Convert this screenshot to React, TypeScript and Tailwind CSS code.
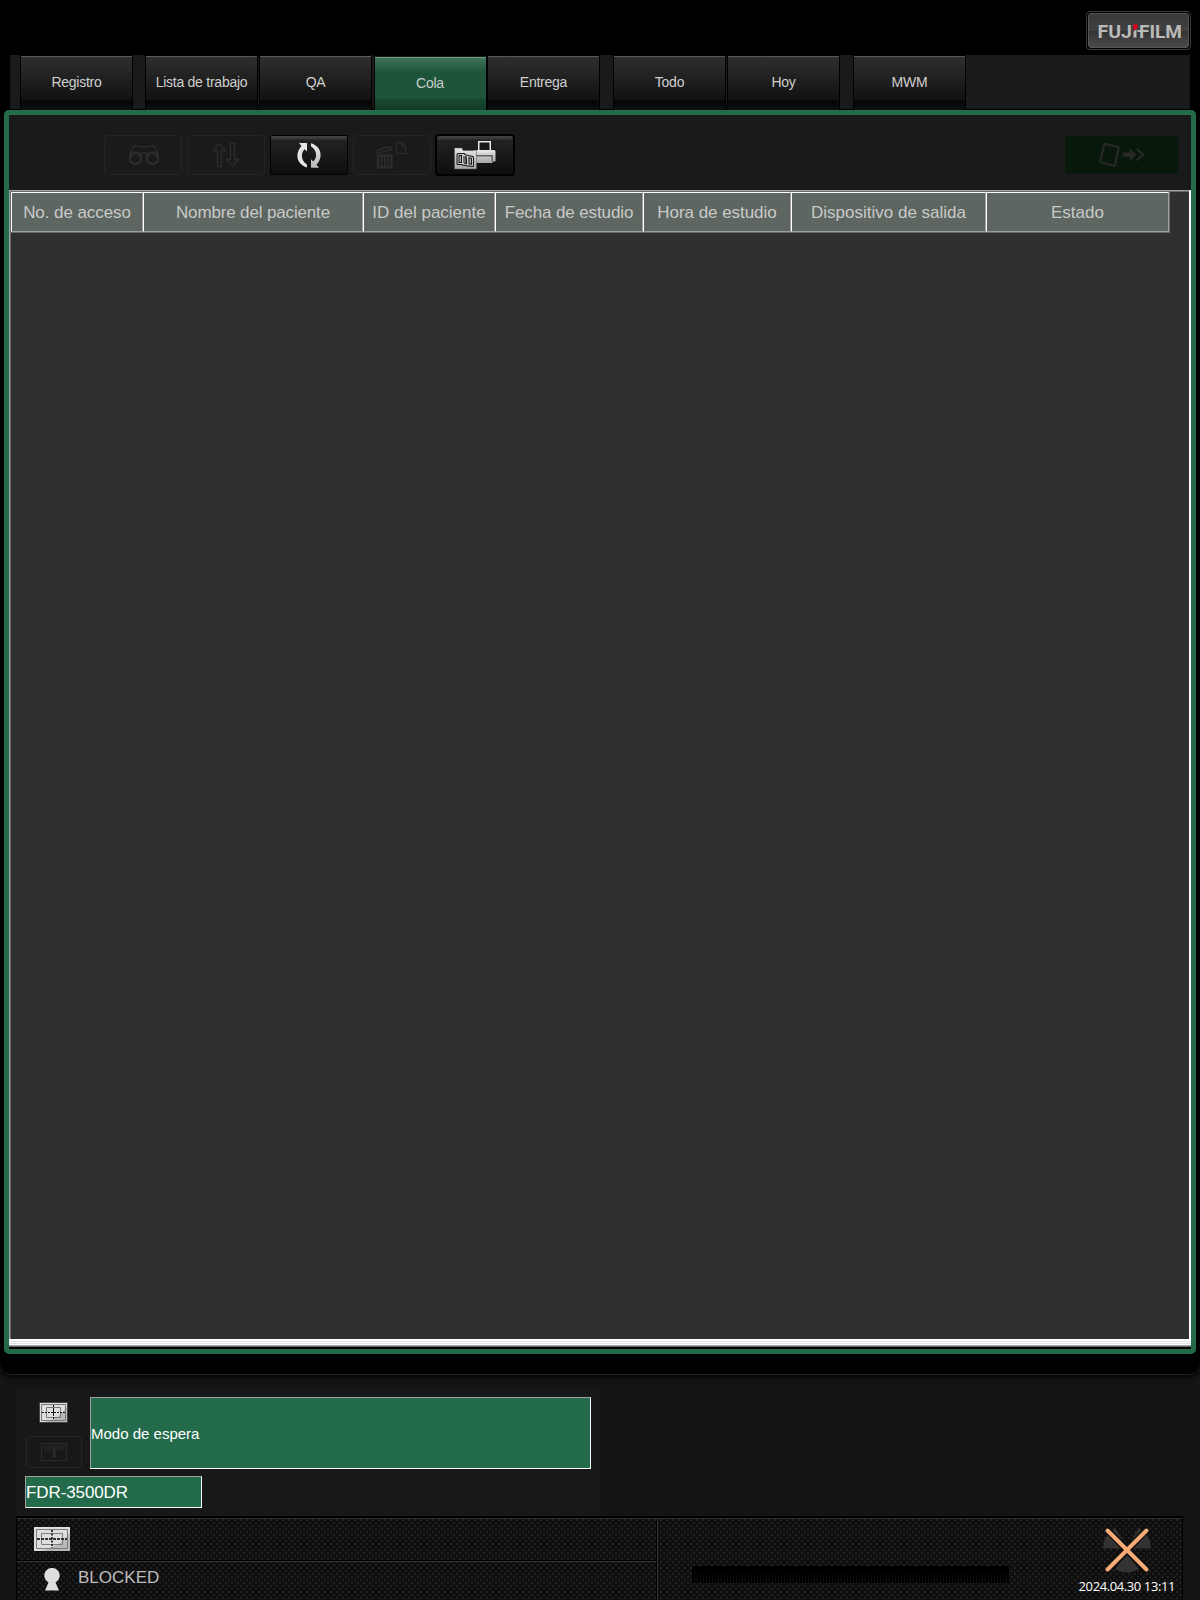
import React from "react";

type TabDef = { label: string; gap: string; active?: boolean };

const tabs: TabDef[] = [
  { label: "Registro", gap: "ml-[10px]" },
  { label: "Lista de trabajo", gap: "ml-[12px]" },
  { label: "QA", gap: "ml-[1px]" },
  { label: "Cola", gap: "ml-[2px]", active: true },
  { label: "Entrega", gap: "ml-0" },
  { label: "Todo", gap: "ml-[13px]" },
  { label: "Hoy", gap: "ml-[1px]" },
  { label: "MWM", gap: "ml-[13px]" },
];

const columns = [
  { label: "No. de acceso", w: "w-[132px]", t: "tracking-[-0.08px]" },
  { label: "Nombre del paciente", w: "w-[220px]", t: "tracking-[-0.15px]" },
  { label: "ID del paciente", w: "w-[132px]", t: "tracking-normal" },
  { label: "Fecha de estudio", w: "w-[148px]", t: "tracking-[-0.12px]" },
  { label: "Hora de estudio", w: "w-[148px]", t: "tracking-[-0.05px]" },
  { label: "Dispositivo de salida", w: "w-[195px]", t: "tracking-normal" },
  { label: "Estado", w: "w-[183px]", t: "tracking-normal" },
];

function Tab({ label, gap, active }: TabDef) {
  return (
    <div
      className={`${gap} w-[113px] h-[55px] shrink-0 border-x border-t border-black flex flex-col ${
        active ? "pt-px" : ""
      }`}
    >
      <div
        className={
          active
            ? "flex-1 border-t border-[#6d9a83] bg-[linear-gradient(#3f7459_0px,#1e5439_14px,#1e5439_40px,#184930_41px,#123a26_53px)] flex items-center justify-center text-[#c8d0cb] text-[14px] leading-none pb-[3px] pr-px"
            : "flex-1 border-t border-[#5a5a5a] bg-[linear-gradient(#2f2f2f_0px,#111_43px,#040404_44px,#111_53px)] flex items-center justify-center text-[#cfcfcf] text-[14px] leading-none pb-[4px]"
        }
      >
        <span className="whitespace-nowrap tracking-[-0.25px]">{label}</span>
      </div>
    </div>
  );
}

function ToolButton({ kind, children }: { kind: "off" | "on" | "focus"; children: React.ReactNode }) {
  const cls =
    kind === "off"
      ? "w-[78px] h-[40px] border border-[#242424] rounded-[4px]"
      : kind === "on"
      ? "w-[78px] h-[40px] border border-black rounded-[2px] bg-[linear-gradient(#424242_0px,#363636_3px,#222_4px,#0e0e0e_38px)]"
      : "w-[80px] h-[42px] -mx-px border-2 border-black rounded-[4px] bg-[linear-gradient(#424242_0px,#363636_3px,#222_4px,#0e0e0e_38px)]";
  return <div className={`${cls} shrink-0 flex items-center justify-center`}>{children}</div>;
}

function Binoculars() {
  return (
    <svg className="ml-px" width="32" height="22" viewBox="0 0 32 22" fill="none" stroke="#2c2c2c">
      <circle cx="7.5" cy="14.5" r="5.600" strokeWidth="2.400" />
      <circle cx="24.500" cy="14.500" r="5.600" strokeWidth="2.400" />
      <path d="M2 11 L4.500 4 Q5.500 1.500 9 1.500 Q11 3 16 3 Q21 3 23 1.500 Q26.500 1.500 27.500 4 L30 11" strokeWidth="1.400" />
      <path d="M12.500 12 L14 9 M19.500 12 L18 9 M12.500 9 H19.500" strokeWidth="1.600" />
    </svg>
  );
}

function SortArrows() {
  return (
    <svg width="28" height="26" viewBox="0 0 28 26" fill="none" stroke="#2c2c2c" strokeWidth="1.300">
      <path d="M5.500 24.500 V8.500 H1.500 L7.500 1.500 L13.500 8.500 H9.500 V24.500 Z" />
      <path d="M18.500 1.500 V17.500 H14.500 L20.500 24.500 L26.500 17.500 H22.500 V1.500 Z" />
    </svg>
  );
}

function Refresh() {
  return (
    <svg width="26" height="27" viewBox="0 0 26 27">
      <defs>
        <linearGradient id="ref" x1="0" y1="0" x2="0" y2="1">
          <stop offset="0" stopColor="#ececec" />
          <stop offset="1" stopColor="#b8b8b8" />
        </linearGradient>
      </defs>
      <path d="M3 1 H11 V9.500 L8.700 7.300 C4.500 11 4.800 18.500 11 22.600 V25.500 C0.500 22.500 -1.500 11.500 5.500 4 Z" fill="#e4e4e4" />
      <path d="M23 25.800 H15 V17.300 L17.300 19.500 C21.500 15.800 21.200 8.300 15 4.200 V1.300 C25.500 4.300 27.500 15.300 20.500 22.800 Z" fill="url(#ref)" />
    </svg>
  );
}

function TrashDoc() {
  return (
    <svg className="mr-[2px]" width="32" height="28" viewBox="0 0 32 28" fill="none" stroke="#2c2c2c">
      <path d="M21.500 1.500 H27 L30.500 5 V12.500 H21.500 Z M27 1.500 V5 H30.500" strokeWidth="1.200" />
      <path d="M1.500 12.500 L17 8.500 M2.500 10.500 Q3 8 6.500 9 Q9 5 11.500 7 Q15.500 5 16.500 8.500" strokeWidth="1.800" />
      <path d="M3 14.500 H16.500 V26.500 H3 Z" strokeWidth="2.400" />
      <path d="M6.700 14 V26 M9.700 14 V26 M12.700 14 V26" strokeWidth="1.600" />
    </svg>
  );
}

const SHEETS =
  "M13.500 16.500 L18.500 17.500 V25.500 L13.500 24.500 Z M8.500 15 L14 16.500 V25 L8.500 24 Z M4 14.500 H10 V23.500 H4 Z";

function FolderPrinter() {
  return (
    <svg width="42" height="30" viewBox="0 0 42 30">
      <defs>
        <linearGradient id="fp" x1="0" y1="0" x2="0" y2="1">
          <stop offset="0" stopColor="#e6e6e6" />
          <stop offset="1" stopColor="#a5a5a5" />
        </linearGradient>
      </defs>
      <path d="M20 10 H40 Q41.500 10 41.500 11.500 V21.500 H38.500 V23 H20 Z" fill="url(#fp)" />
      <rect x="24.750" y="1.750" width="11.500" height="9" fill="#161616" stroke="#e8e8e8" strokeWidth="1.500" />
      <path d="M22 15 H39 V21 H37.500 V16.500 H22 Z" fill="#606060" />
      <path d="M0.500 8 H8 L9 10.500 H22.500 V29 H0.500 Z" fill="url(#fp)" stroke="#555" strokeWidth="0.500" />
      <path d={SHEETS} fill="#aaa" stroke="#151515" strokeWidth="3" strokeLinejoin="round" />
      <path d={SHEETS} fill="none" stroke="#dcdcdc" strokeWidth="0.900" strokeLinejoin="round" />
    </svg>
  );
}

function SendArrow() {
  return (
    <svg className="ml-px" width="48" height="26" viewBox="0 0 48 26" fill="none" stroke="#272927">
      <path d="M6.500 1.500 L21 5.500 L16.500 24 L2 20 Z" strokeWidth="2.200" strokeLinejoin="round" />
      <path d="M25 10.500 H32 V6.500 L38.500 12.800 L32 19 V15 H25 Z" fill="#272927" stroke="none" />
      <path d="M38.500 7 L45.500 12.800 L38.500 18.500" strokeWidth="2.200" />
    </svg>
  );
}

function Detector() {
  return (
    <svg width="36" height="24" viewBox="0 0 36 24">
      <rect width="36" height="24" fill="#dedede" />
      <path d="M36 5 V24 H5 C18 22 30 15 36 5 Z" fill="#b9b9b9" />
      <path d="M2.500 2.500 H33.500 V21.500 H2.500 Z M7.500 6.500 H28.500 V17.500 H7.500 Z" fill="none" stroke="#7d7d7d" />
      <path d="M3 12 H33" stroke="#333" strokeWidth="2" strokeDasharray="3 1" />
      <path d="M18 3 V21" stroke="#333" strokeWidth="2" strokeDasharray="2 1.500" />
    </svg>
  );
}

function DetectorSmall() {
  return (
    <svg width="27" height="19" viewBox="0 0 27 19">
      <rect width="27" height="19" fill="#dedede" />
      <path d="M27 3 V19 H4 C14 17 22 12 27 3 Z" fill="#b9b9b9" />
      <path d="M1.500 1.500 H25.500 V17.500 H1.500 Z M6.500 4.500 H20.500 V14.500 H6.500 Z" fill="none" stroke="#777" />
      <path d="M2 9.500 H25" stroke="#111" strokeDasharray="2 1" />
      <path d="M13.500 2 V17" stroke="#111" strokeDasharray="2 1" />
      <path d="M11 9.500 H16 M13.500 7 V12" stroke="#111" />
    </svg>
  );
}

function XRay() {
  return (
    <svg width="50" height="46" viewBox="0 0 50 46">
      <path d="M1 21.500 A24 24 0 0 1 13 1 L20 12 L21 21.500 Z M49 21.500 A24 24 0 0 0 37 1 L30 12 L29 21.500 Z M25 27 L13 42 A24 24 0 0 0 37 42 Z" fill="#333" />
      <path d="M6 3.500 L44 42.500 M44 3.500 L6 42.500" stroke="#101010" strokeWidth="7" />
      <path d="M5.500 3.500 L44.500 42.500 M44.500 3.500 L5.500 42.500" stroke="#f9ab76" strokeWidth="4" strokeLinecap="round" />
    </svg>
  );
}

const MESH =
  "bg-[radial-gradient(ellipse_0.8px_1.400px_at_2px_2px,#2a2a2a_60%,transparent),radial-gradient(ellipse_0.8px_1.400px_at_5px_5px,#2a2a2a_60%,transparent)] bg-[length:6px_6px]";

export default function App() {
  return (
    <div className="w-[1200px] h-[1600px] bg-[#141414] overflow-hidden flex flex-col font-['Liberation_Sans',Arial,sans-serif]">
      <main className="h-[1375px] shrink-0 bg-black rounded-b-[12px] border-b border-[#222] shadow-[0_2px_4px_#000] flex flex-col">
        <header className="h-[55px] shrink-0 flex justify-end pt-[11px] pr-[9px]">
          <div className="w-[105px] h-[39px] rounded-[4px] border border-[#3c3c3c] p-px">
            <div className="h-full rounded-[3px] border border-[#555] bg-[linear-gradient(#393939,#414141_50%,#323232_51%,#4a4a4a)] flex items-center justify-center">
              <svg className="overflow-visible" width="84" height="22" viewBox="0 0 84 22">
                <g fill="#b9b9b9" fontFamily="Roboto, sans-serif" fontWeight="700" fontSize="18.500">
                  <text x="0.500" y="17.500" textLength="34.500" lengthAdjust="spacingAndGlyphs">FUJ</text>
                  <text x="42" y="17.500" textLength="43" lengthAdjust="spacingAndGlyphs">FILM</text>
                </g>
                <path d="M36.500 11.500 L39.500 9.500 V17.500 H36.500 Z M40.500 10 H44 V12 H40.500 Z" fill="#b9b9b9" />
                <path d="M36.500 4.300 H40.500 V8 L36.500 10.500 Z" fill="#e60020" />
              </svg>
            </div>
          </div>
        </header>

        <nav className="mx-[10px] h-[55px] shrink-0 bg-[#1a1a1a] border-b border-black flex">
          {tabs.map((t) => (
            <Tab key={t.label} {...t} />
          ))}
        </nav>

        <section className="mx-1 h-[1244px] shrink-0 border-[5px] border-[#246b4c] rounded-[5px] bg-black flex flex-col">
          <div className="h-[75px] shrink-0 bg-[#1a1a1a] flex items-center pl-[95px] pr-[13px] pt-[5px]">
            <div className="flex items-center gap-[5px]">
              <ToolButton kind="off"><Binoculars /></ToolButton>
              <ToolButton kind="off"><SortArrows /></ToolButton>
              <ToolButton kind="on"><Refresh /></ToolButton>
              <ToolButton kind="off"><TrashDoc /></ToolButton>
              <ToolButton kind="focus"><FolderPrinter /></ToolButton>
            </div>
            <div className="ml-auto w-[113px] h-[38px] rounded-[3px] bg-[#08190b] flex items-center justify-center">
              <SendArrow />
            </div>
          </div>

          <div className="h-[1149px] shrink-0 bg-[#303030] border-t border-l border-t-[#a0a0a0] border-l-[#a0a0a0] border-r-2 border-r-white">
            <div className="h-full border-t border-l border-[#696969]">
              <div className="flex w-[1159px] h-[41px] border-b border-[#696969] border-r">
                {columns.map((c) => (
                  <div
                    key={c.label}
                    className={`${c.w} ${c.t} shrink-0 h-10 border-t border-l border-t-white border-l-white border-r border-b border-r-[#a0a0a0] border-b-[#a0a0a0] bg-[#5d6660] text-[#c9c9c9] text-[17px] pt-[2px] flex items-center justify-center whitespace-nowrap`}
                  >
                    {c.label}
                  </div>
                ))}
              </div>
            </div>
          </div>
          <div className="h-[8px] shrink-0 bg-[linear-gradient(#fff_0_2px,#e3e3e3_2px_3px,#fff_3px_4px,#e3e3e3_4px_5px,#fff_5px_6px,#a0a0a0_6px_7px,#696969_7px_8px)]" />
        </section>
      </main>

      <section className="mt-[14px] ml-[17px] w-[583px] h-[127px] shrink-0 bg-[#181818] pt-2 pl-2">
        <div className="flex">
          <div className="w-[65px] pl-px flex flex-col pt-[5px]">
            <div className="ml-[13px] w-[29px] h-[21px] border border-[#444]">
              <DetectorSmall />
            </div>
            <div className="mt-[13px] w-[56px] h-[32px] rounded-[4px] border border-[#272727] flex items-center justify-center">
              <svg width="26" height="18" viewBox="0 0 26 18">
                <rect x="0.500" y="0.500" width="25" height="17" fill="none" stroke="#2b2b2b" />
                <path d="M2 2 H24 V8 H2 Z" fill="#202020" />
                <path d="M12 4 H14.500 V6 H12 Z M11 7 H14.500 V13 H16 V14 H11 V13 H12 V8 H11 Z" fill="#2a2a2a" />
              </svg>
            </div>
          </div>
          <div className="w-[501px] h-[72px] bg-[#246b4c] border border-t-[#a0a0a0] border-l-[#a0a0a0] border-r-white border-b-white flex items-center pt-[2px] text-white text-[15px]">
            Modo de espera
          </div>
        </div>
        <div className="mt-[7px] w-[177px] h-[32px] bg-[#246b4c] border border-t-[#a0a0a0] border-l-[#a0a0a0] border-r-white border-b-white flex items-center pt-[2px] text-white text-[17px] tracking-[-0.1px]">
          FDR-3500DR
        </div>
      </section>

      <footer className={`ml-[16px] w-[1167px] h-[84px] shrink-0 border-t-2 border-x border-black bg-[#0f0f0f] flex ${MESH}`}>
        <div className="w-[641px] border-t border-[#303030] border-r flex flex-col">
          <div className="h-[42px] border-b border-black border-r flex items-center pl-[17px] pb-[2px]">
            <Detector />
          </div>
          <div className="flex-1 border-t border-t-[#303030] border-r border-r-black flex items-start">
            <svg className="ml-[27px] mt-[6px]" width="16" height="23" viewBox="0 0 16 23">
              <path d="M4.500 14.500 A7.700 7.700 0 1 1 11.500 14.500 L15 22.500 H1 Z" fill="#dedede" />
            </svg>
            <span className="ml-[18px] mt-[5px] text-[17px] leading-[22px] text-[#bdbdbd]">BLOCKED</span>
          </div>
        </div>
        <div className="flex-1 border-t border-[#303030] flex">
          <div className="ml-[34px] mt-[47px] w-[317px] h-[17px] bg-[linear-gradient(#000_20%,#0008),repeating-linear-gradient(90deg,#000_0_2px,#222_2px_3px)]" />
          <div className="ml-auto pr-[7px] flex flex-col items-end">
            <div className="mr-[23px] mt-[8px]">
              <XRay />
            </div>
            <div className="mt-[5px] text-[13px] leading-[17px] tracking-[-0.4px] text-white whitespace-nowrap font-['Open_Sans',sans-serif]">2024.04.30 13:11</div>
          </div>
        </div>
      </footer>
    </div>
  );
}
